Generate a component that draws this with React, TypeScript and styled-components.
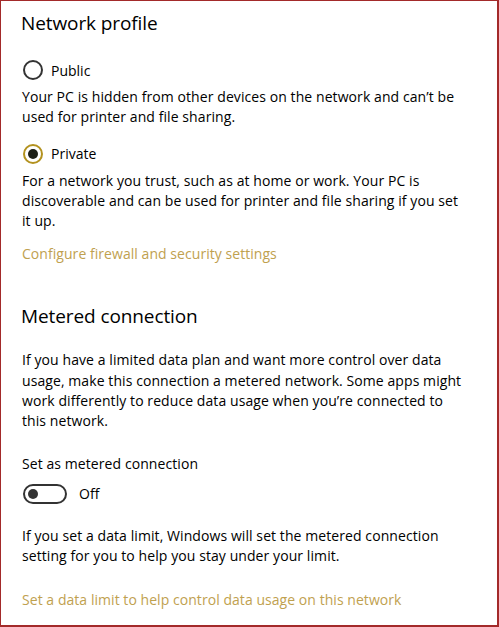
import React from "react";
import styled, { createGlobalStyle } from "styled-components";

const Global = createGlobalStyle`
  html, body { margin: 0; padding: 0; background: #fff; }
  body { font-family: "Open Sans", "Noto Sans", sans-serif; color: #000; }
`;

const Frame = styled.div`
  box-sizing: border-box;
  width: 499px;
  height: 627px;
  border: 1px solid #a32a2a;
  border-right-width: 2px;
  border-bottom-width: 2px;
  padding: 9px 0 0 21px;
  overflow: hidden;
`;

const Heading = styled.h2<{ $top?: number }>`
  margin: ${(p) => p.$top ?? 0}px 0 0 -1px;
  font-size: 19px;
  font-weight: 400;
  line-height: 26px;
  letter-spacing: -0.1px;
`;

const RadioRow = styled.label<{ $top: number }>`
  display: flex;
  align-items: center;
  gap: 8px;
  margin-top: ${(p) => p.$top}px;
  margin-left: 1px;
  height: 22px;
  font-size: 14px;
`;

const RadioCircle = styled.span<{ $checked?: boolean }>`
  box-sizing: border-box;
  width: 20px;
  height: 20px;
  border-radius: 50%;
  border: 2px solid ${(p) => (p.$checked ? "#b3921f" : "#333")};
  display: flex;
  align-items: center;
  justify-content: center;
  &::after {
    content: "";
    display: ${(p) => (p.$checked ? "block" : "none")};
    width: 10px;
    height: 10px;
    border-radius: 50%;
    background: #1c1f17;
  }
`;

const Text = styled.p<{ $top: number }>`
  margin: ${(p) => p.$top}px 0 0 0;
  font-size: 14px;
  line-height: 20.3px;
  letter-spacing: 0.08px;
  width: 474px;
  white-space: nowrap;
`;

const Link = styled.a<{ $top: number }>`
  display: block;
  margin: ${(p) => p.$top}px 0 0 0;
  font-size: 14px;
  line-height: 20px;
  letter-spacing: 0.05px;
  color: #bfa14f;
  text-decoration: none;
`;

const ToggleRow = styled.div<{ $top: number }>`
  display: flex;
  align-items: center;
  gap: 12px;
  margin: ${(p) => p.$top}px 0 0 1px;
  height: 22px;
  font-size: 14px;
`;

const Track = styled.span`
  box-sizing: border-box;
  width: 44px;
  height: 20px;
  border-radius: 10px;
  border: 2px solid #333;
  display: flex;
  align-items: center;
  padding-left: 3px;
  &::after {
    content: "";
    width: 10px;
    height: 10px;
    border-radius: 50%;
    background: #333;
  }
`;

export default function App() {
  return (
    <>
      <Global />
      <Frame>
        <Heading>Network profile</Heading>
        <RadioRow $top={23}>
          <RadioCircle />
          Public
        </RadioRow>
        <Text $top={6}>
          Your PC is hidden from other devices on the network and can’t be
          <br />
          used for printer and file sharing.
        </Text>
        <RadioRow $top={15}>
          <RadioCircle $checked />
          Private
        </RadioRow>
        <Text $top={6}>
          For a network you trust, such as at home or work. Your PC is
          <br />
          discoverable and can be used for printer and file sharing if you set
          <br />
          it up.
        </Text>
        <Link $top={13}>Configure firewall and security settings</Link>
        <Heading $top={39}>Metered connection</Heading>
        <Text $top={21}>
          If you have a limited data plan and want more control over data
          <br />
          usage, make this connection a metered network. Some apps might
          <br />
          work differently to reduce data usage when you’re connected to
          <br />
          this network.
        </Text>
        <Text $top={22}>Set as metered connection</Text>
        <ToggleRow $top={9}>
          <Track />
          Off
        </ToggleRow>
        <Text $top={21}>
          If you set a data limit, Windows will set the metered connection
          <br />
          setting for you to help you stay under your limit.
        </Text>
        <Link $top={23}>Set a data limit to help control data usage on this network</Link>
      </Frame>
    </>
  );
}
